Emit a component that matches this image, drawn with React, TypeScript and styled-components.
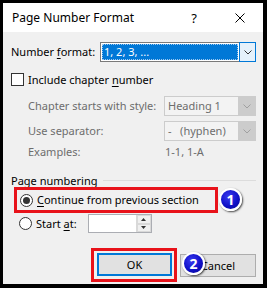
import React from "react";
import styled, { createGlobalStyle } from "styled-components";

const GlobalStyle = createGlobalStyle`
  html, body { margin: 0; padding: 0; background: #000; }
  body { font-family: "Noto Sans", "Open Sans", sans-serif; font-size: 11px; color: #000; }
  * { box-sizing: border-box; }
`;

const Frame = styled.div`
  position: relative;
  width: 267px;
  height: 288px;
  border-style: solid;
  border-color: #000;
  border-width: 3px 4px 4px 3px;
  background: #f0f0f0;
  display: flex;
  flex-direction: column;
  overflow: hidden;
`;

const TitleBar = styled.div`
  height: 29px;
  background: #fff;
  display: flex;
  align-items: center;
  padding-left: 9px;
`;

const Title = styled.div`
  flex: 1;
  font-size: 12px;
  line-height: 14px;
`;

const TitleButton = styled.div`
  width: 46px;
  height: 29px;
  display: flex;
  align-items: center;
  justify-content: center;
  font-size: 13px;
`;

const Body = styled.div`
  flex: 1;
  display: flex;
  flex-direction: column;
  padding: 10px 7px 0 8px;
`;

const Row = styled.div<{ $mt?: number; $indent?: number; $h?: number }>`
  display: flex;
  align-items: center;
  margin-top: ${(p) => p.$mt ?? 0}px;
  padding-left: ${(p) => p.$indent ?? 0}px;
  height: ${(p) => p.$h ?? 20}px;
`;

const Label = styled.span<{ $w?: number; $muted?: boolean }>`
  width: ${(p) => (p.$w ? `${p.$w}px` : "auto")};
  flex: none;
  white-space: nowrap;
  color: ${(p) => (p.$muted ? "#6d6d6d" : "#000")};
  line-height: 16px;
`;

const U = styled.span`
  text-decoration: underline;
  text-underline-offset: 2px;
`;

const Combo = styled.div<{ $w: number; $disabled?: boolean }>`
  width: ${(p) => p.$w}px;
  height: 20px;
  display: flex;
  border: 1px solid ${(p) => (p.$disabled ? "#cccccc" : "#7a7a7a")};
  background: ${(p) => (p.$disabled ? "#f3f3f3" : "#fff")};
`;

const ComboValue = styled.div<{ $selected?: boolean; $disabled?: boolean }>`
  flex: 1;
  margin: ${(p) => (p.$selected ? "1px" : "0")};
  padding-left: ${(p) => (p.$selected ? "2px" : "3px")};
  display: flex;
  align-items: center;
  background: ${(p) => (p.$selected ? "#0078d7" : "transparent")};
  color: ${(p) => (p.$selected ? "#fff" : p.$disabled ? "#6d6d6d" : "#000")};
  outline: ${(p) => (p.$selected ? "1px dotted #9cc7ee" : "none")};
  outline-offset: -1px;
  white-space: pre;
  line-height: 16px;
`;

const ComboArrow = styled.div<{ $active?: boolean }>`
  width: 17px;
  flex: none;
  display: flex;
  align-items: center;
  justify-content: center;
  margin: ${(p) => (p.$active ? "-1px -1px -1px 0" : "0")};
  border: ${(p) => (p.$active ? "1px solid #0078d7" : "none")};
  background: ${(p) => (p.$active ? "#e5f1fb" : "#cccccc")};
`;

const Chevron = ({ color }: { color: string }) => (
  <svg width="8" height="5" viewBox="0 0 8 5">
    <polyline points="0.5,0.5 4,4 7.5,0.5" fill="none" stroke={color} strokeWidth="1" />
  </svg>
);

const CheckBox = styled.div`
  width: 13px;
  height: 13px;
  border: 1px solid #333;
  background: #fff;
  flex: none;
  margin-right: 4px;
`;

const Radio = styled.div<{ $checked?: boolean }>`
  width: 13px;
  height: 13px;
  border-radius: 50%;
  border: 1px solid #333;
  background: #fff;
  flex: none;
  margin-right: 4px;
  display: flex;
  align-items: center;
  justify-content: center;
  &::after {
    content: "";
    display: ${(p) => (p.$checked ? "block" : "none")};
    width: 7px;
    height: 7px;
    border-radius: 50%;
    background: #333;
  }
`;

const GroupHeader = styled.div`
  display: flex;
  align-items: center;
  margin-top: 14px;
  height: 13px;
  line-height: 13px;
  gap: 6px;
  &::after {
    content: "";
    flex: 1;
    height: 1px;
    background: #dcdcdc;
  }
`;

const Highlight = styled.div<{ $w: number; $pad: string }>`
  width: ${(p) => p.$w}px;
  border: 3px solid #e8121a;
  padding: ${(p) => p.$pad};
`;

const HighlightRow = styled.div`
  display: flex;
  align-items: center;
  height: 20px;
`;

const Spin = styled.div`
  width: 64px;
  height: 19px;
  border: 1px solid #abadb3;
  background: #fff;
  display: flex;
  justify-content: flex-end;
  margin-left: 11px;
`;

const SpinButtons = styled.div`
  width: 15px;
  display: flex;
  flex-direction: column;
  border-left: 1px solid #d9d9d9;
`;

const SpinBtn = styled.div`
  flex: 1;
  display: flex;
  align-items: center;
  justify-content: center;
  background: #f0f0f0;
  border: 1px solid #d9d9d9;
`;

const Footer = styled.div`
  display: flex;
  justify-content: flex-end;
  align-items: center;
  gap: 3px;
  margin-top: 15px;
`;

const Button = styled.div<{ $default?: boolean }>`
  width: ${(p) => (p.$default ? 75 : 76)}px;
  height: 23px;
  display: flex;
  align-items: center;
  justify-content: center;
  background: #e1e1e1;
  border: ${(p) => (p.$default ? "2px solid #0078d7" : "1px solid #adadad")};
`;

const Badge = styled.div<{ $x: number; $y: number }>`
  position: absolute;
  left: ${(p) => p.$x}px;
  top: ${(p) => p.$y}px;
  width: 23px;
  height: 23px;
  border-radius: 50%;
  border: 2px solid #fff;
  background: radial-gradient(circle at 40% 35%, #3a3af0 0%, #1010c8 55%, #05058a 100%);
  box-shadow: 1px 1px 2px rgba(0, 0, 0, 0.7);
  color: #fff;
  font-family: "Noto Sans", "DejaVu Sans", sans-serif;
  font-weight: 700;
  font-size: 14px;
  display: flex;
  align-items: center;
  justify-content: center;
  line-height: 1;
`;

export default function App() {
  return (
    <>
      <GlobalStyle />
      <Frame>
        <TitleBar>
          <Title>Page Number Format</Title>
          <TitleButton>?</TitleButton>
          <TitleButton>
            <svg width="10" height="10" viewBox="0 0 10 10">
              <line x1="0.5" y1="0.5" x2="9.5" y2="9.5" stroke="#000" strokeWidth="1" />
              <line x1="9.5" y1="0.5" x2="0.5" y2="9.5" stroke="#000" strokeWidth="1" />
            </svg>
          </TitleButton>
        </TitleBar>
        <Body>
          <Row>
            <Label $w={89}>
              Number <U>f</U>ormat:
            </Label>
            <Combo $w={156}>
              <ComboValue $selected>1, 2, 3, ...</ComboValue>
              <ComboArrow $active>
                <Chevron color="#333" />
              </ComboArrow>
            </Combo>
          </Row>
          <Row $mt={11} $h={13} $indent={-1}>
            <CheckBox />
            <Label>
              Include chapter <U>n</U>umber
            </Label>
          </Row>
          <Row $mt={10} $indent={17}>
            <Label $w={136} $muted>
              Chapter starts with style:
            </Label>
            <Combo $w={92} $disabled>
              <ComboValue $disabled>Heading 1</ComboValue>
              <ComboArrow>
                <Chevron color="#a0a0a0" />
              </ComboArrow>
            </Combo>
          </Row>
          <Row $mt={5} $indent={17}>
            <Label $w={136} $muted>
              Use separator:
            </Label>
            <Combo $w={92} $disabled>
              <ComboValue $disabled>{"-   (hyphen)"}</ComboValue>
              <ComboArrow>
                <Chevron color="#a0a0a0" />
              </ComboArrow>
            </Combo>
          </Row>
          <Row $mt={3} $h={16} $indent={17}>
            <Label $w={137} $muted>
              Examples:
            </Label>
            <Label $muted>1-1, 1-A</Label>
          </Row>
          <GroupHeader>Page numbering</GroupHeader>
          <Highlight $w={204} $pad="0 0 0 3px" style={{ marginLeft: 3 }}>
            <HighlightRow>
              <Radio $checked />
              <Label>
                <U>C</U>ontinue from previous section
              </Label>
            </HighlightRow>
          </Highlight>
          <Row $h={19} $mt={1} $indent={8}>
            <Radio />
            <Label>
              Start <U>a</U>t:
            </Label>
            <Spin>
              <SpinButtons>
                <SpinBtn>
                  <svg width="5" height="3" viewBox="0 0 5 3">
                    <polygon points="0,3 2.5,0 5,3" fill="#333" />
                  </svg>
                </SpinBtn>
                <SpinBtn>
                  <svg width="5" height="3" viewBox="0 0 5 3">
                    <polygon points="0,0 2.5,3 5,0" fill="#333" />
                  </svg>
                </SpinBtn>
              </SpinButtons>
            </Spin>
          </Row>
          <Footer>
            <Highlight $w={86} $pad="2px 2px 3px 3px">
              <Button $default>OK</Button>
            </Highlight>
            <Button>Cancel</Button>
          </Footer>
        </Body>
        <Badge $x={216} $y={185}>1</Badge>
        <Badge $x={179} $y={249}>2</Badge>
      </Frame>
    </>
  );
}
